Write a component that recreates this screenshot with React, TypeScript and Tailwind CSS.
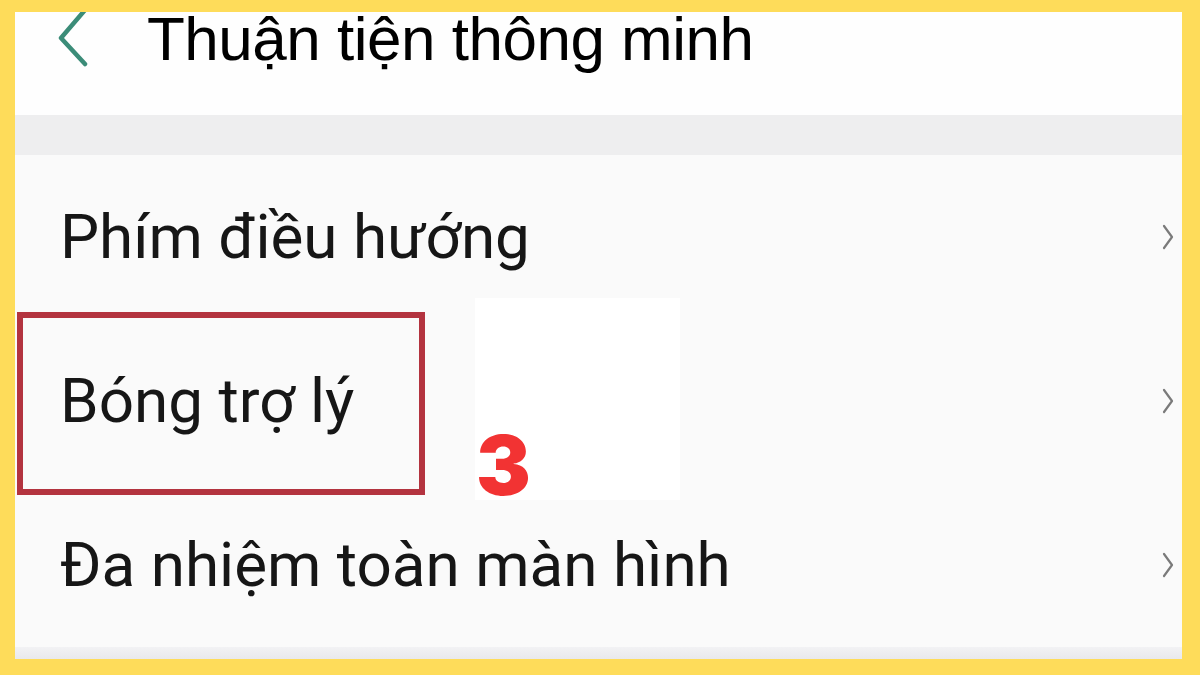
import React from 'react'

const rows = ['Phím điều hướng', 'Bóng trợ lý', 'Đa nhiệm toàn màn hình']

function Chevron() {
  return (
    <svg width="14" height="28" viewBox="0 0 14 28" fill="none">
      <path d="M3 3 L11 14 L3 25" stroke="#7a7a7a" strokeWidth="2.2" strokeLinecap="round" strokeLinejoin="round" />
    </svg>
  )
}

export default function App() {
  return (
    <div className="w-[1200px] h-[675px] bg-[#fedc5a] pt-[12px] pl-[15px] pr-[18px] pb-[16px] overflow-hidden">
      <div className="relative flex h-full flex-col overflow-hidden bg-[#fafafa]">
        {/* header */}
        <div className="flex h-[103px] items-start bg-[#fefefe]">
          <svg className="ml-[40px] -mt-[6px]" width="36" height="62" viewBox="0 0 36 62" fill="none">
            <path d="M30 4 L6 32 L30 58" stroke="#3b8c78" strokeWidth="4.5" strokeLinecap="round" strokeLinejoin="round" />
          </svg>
          <h1
            className="ml-[56px] -mt-[4px] text-[62px] leading-none tracking-[-0.5px] text-black"
            style={{ fontFamily: '"Liberation Sans", Arial, sans-serif' }}
          >
            Thuận tiện thông minh
          </h1>
        </div>
        <div className="h-[40px] bg-[#eeeeef]" />

        {/* list */}
        <div className="flex flex-1 flex-col">
          {rows.map((r) => (
            <div key={r} className="flex h-[164px] items-center justify-between pl-[45px] pr-[7px]">
              <span
                className="text-[62px] leading-none text-[#161616]"
                style={{ fontFamily: 'Roboto, "Noto Sans", sans-serif' }}
              >
                {r}
              </span>
              <Chevron />
            </div>
          ))}
        </div>
        <div className="h-[12px] bg-gradient-to-b from-[#f2f2f4] to-[#e9e9ec]" />

        {/* annotation overlays */}
        <div className="absolute left-[460px] top-[286px] h-[202px] w-[205px] bg-white" />
        <div className="absolute left-[2px] top-[300px] h-[183px] w-[408px] border-[6px] border-[#b3333f]" />
        <div
          className="absolute left-[461px] top-[413px] text-[82px] font-black leading-none text-[#f23333]"
          style={{ fontFamily: 'Inter, "Open Sans", sans-serif' }}
        >
          3
        </div>
      </div>
    </div>
  )
}
